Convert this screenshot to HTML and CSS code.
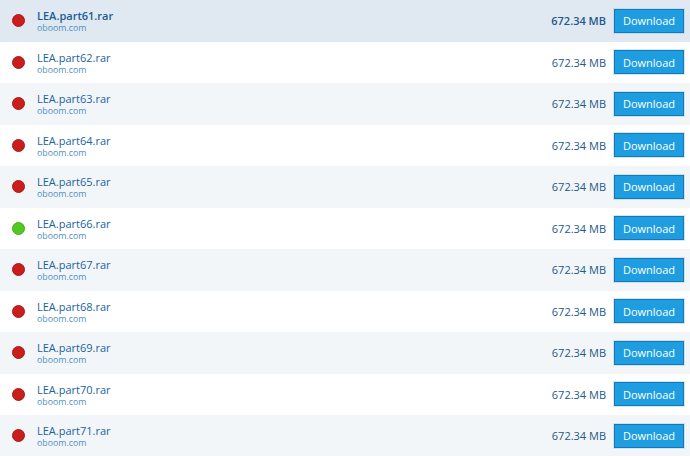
FILE: index.html
```html
<!DOCTYPE html>
<html>
<head>
<meta charset="utf-8">
<link rel="stylesheet" href="styles.css">
</head>
<body>
<ul class="list">
  <li class="row active"><span class="dot red"></span><div class="info"><a class="name">LEA.part61.rar</a><span class="host">oboom.com</span></div><span class="size">672.34 MB</span><button class="dl">Download</button></li>
  <li class="row"><span class="dot red"></span><div class="info"><a class="name">LEA.part62.rar</a><span class="host">oboom.com</span></div><span class="size">672.34 MB</span><button class="dl">Download</button></li>
  <li class="row alt"><span class="dot red"></span><div class="info"><a class="name">LEA.part63.rar</a><span class="host">oboom.com</span></div><span class="size">672.34 MB</span><button class="dl">Download</button></li>
  <li class="row"><span class="dot red"></span><div class="info"><a class="name">LEA.part64.rar</a><span class="host">oboom.com</span></div><span class="size">672.34 MB</span><button class="dl">Download</button></li>
  <li class="row alt"><span class="dot red"></span><div class="info"><a class="name">LEA.part65.rar</a><span class="host">oboom.com</span></div><span class="size">672.34 MB</span><button class="dl">Download</button></li>
  <li class="row"><span class="dot green"></span><div class="info"><a class="name">LEA.part66.rar</a><span class="host">oboom.com</span></div><span class="size">672.34 MB</span><button class="dl">Download</button></li>
  <li class="row alt"><span class="dot red"></span><div class="info"><a class="name">LEA.part67.rar</a><span class="host">oboom.com</span></div><span class="size">672.34 MB</span><button class="dl">Download</button></li>
  <li class="row"><span class="dot red"></span><div class="info"><a class="name">LEA.part68.rar</a><span class="host">oboom.com</span></div><span class="size">672.34 MB</span><button class="dl">Download</button></li>
  <li class="row alt"><span class="dot red"></span><div class="info"><a class="name">LEA.part69.rar</a><span class="host">oboom.com</span></div><span class="size">672.34 MB</span><button class="dl">Download</button></li>
  <li class="row"><span class="dot red"></span><div class="info"><a class="name">LEA.part70.rar</a><span class="host">oboom.com</span></div><span class="size">672.34 MB</span><button class="dl">Download</button></li>
  <li class="row alt"><span class="dot red"></span><div class="info"><a class="name">LEA.part71.rar</a><span class="host">oboom.com</span></div><span class="size">672.34 MB</span><button class="dl">Download</button></li>
</ul>
</body>
</html>
```
FILE: styles.css
```css
html, body {
  margin: 0;
  padding: 0;
  background: #ffffff;
  font-family: "Open Sans", "Liberation Sans", sans-serif;
}
.list {
  list-style: none;
  margin: 0;
  padding: 0;
}
.row {
  display: flex;
  align-items: center;
  height: 41.5px;
  background: #ffffff;
}
.row.alt {
  background: #f3f6f9;
}
.row.active {
  background: #e0e9f1;
}
.dot {
  width: 11px;
  height: 11px;
  border-radius: 50%;
  margin-left: 12px;
  flex: none;
}
.dot.red {
  background: #cc1d1d;
  border: 1px solid #a81818;
}
.dot.green {
  background: #52c922;
  border: 1px solid #45ad1b;
}
.info {
  display: flex;
  flex-direction: column;
  margin-left: 12px;
  flex: 1;
  margin-top: 2px;
}
.name {
  font-size: 11px;
  line-height: 14px;
  color: #1b63a0;
}
.row.active .name {
  font-weight: 600;
  color: #1a5c95;
}
.host {
  font-size: 8.8px;
  line-height: 11px;
  color: #4f8fc2;
}
.size {
  font-size: 11px;
  color: #23598a;
  margin-right: 8px;
}
.row.active .size {
  font-weight: 600;
}
.dl {
  width: 70px;
  height: 24px;
  margin-right: 6px;
  padding: 0;
  background: #1e9de1;
  border: 1px solid #1478bc;
  box-shadow: 0 0 0 1px rgba(170, 205, 228, 0.5);
  color: #ffffff;
  font-family: "Open Sans", "Liberation Sans", sans-serif;
  font-size: 11px;
  flex: none;
}
```
